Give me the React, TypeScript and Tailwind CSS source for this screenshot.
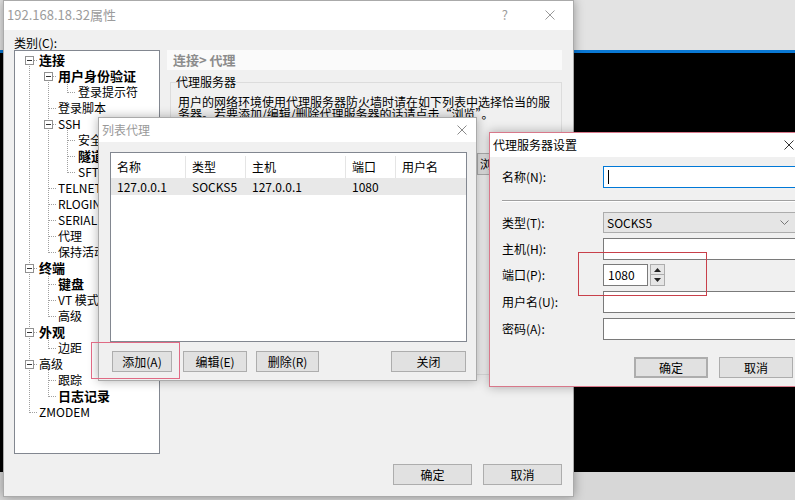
import React from "react";

const btn =
  "flex items-center justify-center h-[21px] bg-[#e1e1e1] border border-[#adadad] text-[12px] leading-[14px] text-black";
const input = "h-[22px] w-[194px] bg-white border border-[#7a7a7a]";

type Row = { t: string; l: number; b?: boolean; box?: boolean };

const rows: Row[] = [
  { t: "连接", l: 0, b: true, box: true },
  { t: "用户身份验证", l: 1, b: true, box: true },
  { t: "登录提示符", l: 2 },
  { t: "登录脚本", l: 1 },
  { t: "SSH", l: 1, box: true },
  { t: "安全", l: 2 },
  { t: "隧道", l: 2, b: true },
  { t: "SFTP 会话", l: 2 },
  { t: "TELNET", l: 1 },
  { t: "RLOGIN", l: 1 },
  { t: "SERIAL", l: 1 },
  { t: "代理", l: 1 },
  { t: "保持活动", l: 1 },
  { t: "终端", l: 0, b: true, box: true },
  { t: "键盘", l: 1, b: true },
  { t: "VT 模式", l: 1 },
  { t: "高级", l: 1 },
  { t: "外观", l: 0, b: true, box: true },
  { t: "边距", l: 1 },
  { t: "高级", l: 0, box: true },
  { t: "跟踪", l: 1 },
  { t: "日志记录", l: 1, b: true },
  { t: "ZMODEM", l: 0 },
];

const pad = ["pl-[24px]", "pl-[43px]", "pl-[63px]"];
const LX = [14, 33, 52];
const cy = (i: number) => 9 + 16 * i;
const verticals = [
  [0, 0, 22],
  [1, 1, 12],
  [1, 13, 16],
  [1, 17, 18],
  [1, 19, 21],
  [2, 1, 2],
  [2, 4, 7],
];

function Close({ color = "#999999" }: { color?: string }) {
  return (
    <svg width="10" height="10" viewBox="0 0 10 10">
      <path d="M0.5 0.5 L9.5 9.5 M9.5 0.5 L0.5 9.5" stroke={color} strokeWidth="1" />
    </svg>
  );
}

function Tree() {
  return (
    <div className="relative w-[146px] h-[404px] border border-[#828790] bg-white overflow-hidden pt-[1px]">
      <svg className="absolute left-0 top-0" width="144" height="402" shapeRendering="crispEdges">
        {verticals.map(([l, a, b], i) => (
          <line key={"v" + i} x1={LX[l] + 0.5} x2={LX[l] + 0.5} y1={cy(a)} y2={cy(b) + 1} stroke="#a0a0a0" strokeDasharray="1 1" />
        ))}
        {rows.map((r, i) => (
          <line key={"h" + i} x1={LX[r.l] + (r.box ? 5 : 1)} x2={LX[r.l] + 9} y1={cy(i) + 0.5} y2={cy(i) + 0.5} stroke="#a0a0a0" strokeDasharray="1 1" />
        ))}
        {rows.map((r, i) =>
          r.box ? (
            <g key={"b" + i}>
              <rect x={LX[r.l] - 3.5} y={cy(i) - 3.5} width="8" height="8" fill="white" stroke="#919191" />
              <line x1={LX[r.l] - 2} x2={LX[r.l] + 3} y1={cy(i) + 0.5} y2={cy(i) + 0.5} stroke="#333" />
            </g>
          ) : null
        )}
      </svg>
      {rows.map((r, i) => (
        <div key={i} className={`relative h-[16px] leading-[16px] whitespace-nowrap ${pad[r.l]} ${r.b ? "font-bold text-[13px]" : "text-[12px]"}`}>
          {r.t}
        </div>
      ))}
    </div>
  );
}

function MainWindow() {
  return (
    <div className="absolute left-[3px] top-0 w-[571px] h-[497px] border border-[#aaaaaa] bg-[#f0f0f0] flex flex-col shadow-[0_0_10px_rgba(0,0,0,0.35)]">
      <div className="h-[29px] bg-white flex items-center pl-[3px] pr-[18px] pb-[2px] text-[#9c9c9c]">
        <span className="text-[13px]">192.168.18.32属性</span>
        <span className="ml-auto text-[13px]">?</span>
        <span className="ml-[37px] flex">
          <Close />
        </span>
      </div>
      <div className="flex-1 flex flex-col px-[10px] pt-[5px]">
        <div className="h-[15px] leading-[15px]">类别(C):</div>
        <div className="flex gap-[7px]">
          <Tree />
          <div className="w-[395px] flex flex-col">
            <div className="h-[20px] bg-[#fafafa] pl-[6px] flex items-center text-[13px] font-bold text-[#8c8c8c]">
              连接&gt; 代理
            </div>
            <fieldset className="mt-[5px] ml-[3px] h-[300px] border border-[#dcdcdc] pl-[7px] pr-[6px]">
              <legend className="-ml-[2px] px-0 leading-[14px]">代理服务器</legend>
              <div className="mt-[7px] leading-[12px] whitespace-nowrap">
                用户的网络环境使用代理服务器防火墙时请在如下列表中选择恰当的服
                <br />
                务器。若要添加/编辑/删除代理服务器的话请点击“浏览”。
              </div>
              <div className="flex mt-[33px]">
                <div className="w-[290px] h-[190px] bg-white border border-[#828790]" />
                <div className="ml-auto w-[78px] h-[22px] bg-[#e1e1e1] border border-[#adadad] flex items-center pl-[2px]">
                  浏览(W)...
                </div>
              </div>
            </fieldset>
          </div>
        </div>
        <div className="flex justify-end gap-[11px] mt-[10px] pr-[1px]">
          <div className={`${btn} w-[79px]`}>确定</div>
          <div className={`${btn} w-[79px]`}>取消</div>
        </div>
      </div>
    </div>
  );
}

function ListDialog() {
  const cols = ["w-[75px]", "w-[60px]", "w-[100px]", "w-[50px]", "flex-1"];
  const head = ["名称", "类型", "主机", "端口", "用户名"];
  const data = ["127.0.0.1", "SOCKS5", "127.0.0.1", "1080", ""];
  return (
    <div className="absolute left-[98px] top-[117px] w-[379px] h-[264px] border border-[#aaaaaa] bg-[#f0f0f0] flex flex-col shadow-[0_0_10px_rgba(0,0,0,0.3)]">
      <div className="h-[24px] bg-white flex items-center pl-[3px] pr-[9px] text-[#999999]">
        <span>列表代理</span>
        <span className="ml-auto flex">
          <Close color="#8a8a8a" />
        </span>
      </div>
      <div className="pl-[11px] pt-[10px]">
        <div className="w-[357px] h-[190px] border border-[#828790] bg-white">
          <div className="flex h-[25px] pt-[3px]">
            {head.map((h, i) => (
              <div key={i} className={`${cols[i]} flex items-center pl-[6px] ${i < 4 ? "border-r border-[#e5e5e5]" : ""}`}>
                {h}
              </div>
            ))}
          </div>
          <div className="flex h-[17px] bg-[#e8e8e8]">
            {data.map((d, i) => (
              <div key={i} className={`${cols[i]} flex items-center pl-[6px]`}>
                {d}
              </div>
            ))}
          </div>
        </div>
        <div className="flex w-[357px] mt-[9px] pl-[2px]">
          <div className={`${btn} h-[20px] w-[60px]`}>添加(A)</div>
          <div className={`${btn} h-[20px] w-[64px] ml-[11px]`}>编辑(E)</div>
          <div className={`${btn} h-[20px] w-[63px] ml-[9px]`}>删除(R)</div>
          <div className={`${btn} h-[20px] w-[75px] ml-auto mr-[1px]`}>关闭</div>
        </div>
      </div>
    </div>
  );
}

function Spin() {
  return (
    <div className="ml-[2px] w-[15px] h-[22px] flex flex-col">
      <div className="h-[11px] bg-[#e6e6e6] border border-[#adadad] flex items-center justify-center">
        <svg width="7" height="4" viewBox="0 0 7 4">
          <path d="M3.5 0 L7 4 L0 4 Z" fill="#222" />
        </svg>
      </div>
      <div className="h-[11px] bg-[#e6e6e6] border border-t-0 border-[#adadad] flex items-center justify-center">
        <svg width="7" height="4" viewBox="0 0 7 4">
          <path d="M0 0 L7 0 L3.5 4 Z" fill="#222" />
        </svg>
      </div>
    </div>
  );
}

function ProxyDialog() {
  const label = "w-[101px] whitespace-nowrap";
  return (
    <div className="absolute left-[489px] top-[132px] w-[313px] h-[255px] border border-[#d8788a] bg-[#f0f0f0] flex flex-col shadow-[0_0_10px_rgba(0,0,0,0.3)]">
      <div className="h-[24px] bg-white flex items-center pl-[3px] pr-[7px] text-black">
        <span>代理服务器设置</span>
        <span className="ml-auto flex">
          <Close color="#333333" />
        </span>
      </div>
      <div className="pl-[12px] pt-[9px] flex flex-col">
        <div className="flex items-center h-[22px]">
          <div className={label}>名称(N):</div>
          <div className={`${input} border-[#0078d7] flex items-center pl-[4px]`}>
            <div className="w-[1px] h-[14px] bg-black" />
          </div>
        </div>
        <div className="mt-[12px] h-[2px] border-t border-[#a0a0a0] border-b border-b-white" />
        <div className="flex items-center h-[21px] mt-[10px]">
          <div className={label}>类型(T):</div>
          <div className="w-[194px] h-[21px] bg-[#e5e5e5] border border-[#acacac] flex items-center pl-[3px]">
            SOCKS5
            <svg className="ml-auto mr-[7px]" width="9" height="5" viewBox="0 0 9 5">
              <path d="M0.5 0.5 L4.5 4.5 L8.5 0.5" stroke="#777" fill="none" />
            </svg>
          </div>
        </div>
        <div className="flex items-center h-[22px] mt-[5px]">
          <div className={label}>主机(H):</div>
          <div className={input} />
        </div>
        <div className="flex items-center h-[22px] mt-[4px]">
          <div className={label}>端口(P):</div>
          <div className="w-[45px] h-[22px] bg-white border border-[#7a7a7a] flex items-center pl-[4px]">1080</div>
          <Spin />
        </div>
        <div className="flex items-center h-[22px] mt-[5px]">
          <div className={label}>用户名(U):</div>
          <div className={input} />
        </div>
        <div className="flex items-center h-[22px] mt-[5px]">
          <div className={label}>密码(A):</div>
          <div className={input} />
        </div>
        <div className="flex mt-[17px]">
          <div className={`${btn} w-[74px] ml-[132px] border-2 border-[#2a74c0]`}>确定</div>
          <div className={`${btn} w-[74px] ml-[11px]`}>取消</div>
        </div>
      </div>
    </div>
  );
}

export default function App() {
  return (
    <div className="relative w-[795px] h-[500px] overflow-hidden font-['Noto_Sans_CJK_SC',sans-serif] text-[12px] leading-[14px] text-black">
      <div className="flex flex-col h-full">
        <div className="h-[50px] bg-[#e3e3e3]" />
        <div className="h-[3px] bg-[#0a78d4]" />
        <div className="flex-1 bg-black" />
        <div className="h-[28px] bg-[#d7d7d7]" />
      </div>
      <MainWindow />
      <ListDialog />
      <ProxyDialog />
      <div className="absolute left-[91px] top-[342px] w-[89px] h-[37px] border border-[#e06a84]" />
      <div className="absolute left-[578px] top-[252px] w-[129px] h-[44px] border border-[#c8404a]" />
    </div>
  );
}
